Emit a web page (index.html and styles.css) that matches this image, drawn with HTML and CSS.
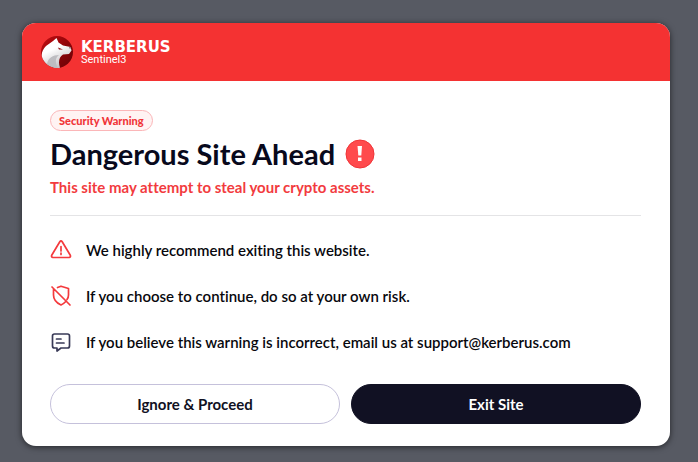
FILE: index.html
```html
<!DOCTYPE html>
<html lang="en">
<head>
<meta charset="utf-8">
<meta name="viewport" content="width=device-width, initial-scale=1">
<title>Dangerous Site Ahead</title>
<link rel="stylesheet" href="styles.css">
</head>
<body>
<main class="card">
  <header class="brand">
    <svg class="brand-logo" viewBox="0 0 32 32" aria-hidden="true">
      <defs>
        <linearGradient id="disc" x1="0" y1="0" x2="1" y2="1"><stop offset="0" stop-color="#c40d12"/><stop offset=".5" stop-color="#920408"/><stop offset="1" stop-color="#650206"/></linearGradient>
        <linearGradient id="fur" x1="0" y1="0" x2=".5" y2="1"><stop offset=".45" stop-color="#fff"/><stop offset="1" stop-color="#c4c4c7"/></linearGradient>
      </defs>
      <circle cx="16" cy="16" r="16" fill="url(#disc)"/>
      <path d="M1 21C0 17 2 13 5 10L12 5L15.500 2L17.500 6.500L22 9.500L29.500 11L30.500 14.500L28 18L22 18.500C18 21 17 26 19 31.700C11 33 3 28 1 21Z" fill="url(#fur)"/>
      <path d="M6 28C7 22 12 19 18 19C14 22 14 27 17 32C12 32 8 30 6 28Z" fill="#bdbdc1"/>
      <path d="M17 11.500L22 13.500L18 13.500Z" fill="#8c090d"/>
      <path d="M28 11L30 11.500L29 13Z" fill="#5b5055"/>
    </svg>
    <div class="brand-text">
      <span class="brand-name">KERBERUS</span>
      <span class="brand-product">Sentinel3</span>
    </div>
  </header>
  <div class="content">
    <span class="tag">Security Warning</span>
    <div class="heading">
      <h1>Dangerous Site Ahead</h1>
      <svg class="alert" viewBox="0 0 30 30" aria-hidden="true"><circle cx="15" cy="15" r="14" fill="#ff4a4d" stroke="#ef3438"/><path d="M12.500 7h4.500l-.700 9.500h-3zM13 18.500h3.500v3.500H13z" fill="#fff"/></svg>
    </div>
    <p class="lead">This site may attempt to steal your crypto assets.</p>
    <ul class="notes">
      <li>
        <svg class="icon danger" viewBox="0 0 22 22" aria-hidden="true"><path d="M9.800 2.700L1.700 16.300Q1 18.100 3 18.500H19Q21 18.100 20.300 16.300L12.200 2.700Q11 .9 9.800 2.700ZM11 7.500v4.500M11 14v1.500"/></svg>
        <span>We highly recommend exiting this website.</span>
      </li>
      <li>
        <svg class="icon danger" viewBox="0 0 22 22" aria-hidden="true"><path d="M2 2L20 20M7.500 2.500L11 1.200L18.500 3.500V10Q18.500 12.500 17 14.500M3.500 4.500V10Q3.500 16.500 11 20Q13.500 19 15.500 16.800"/></svg>
        <span>If you choose to continue, do so at your own risk.</span>
      </li>
      <li>
        <svg class="icon" viewBox="0 0 22 22" aria-hidden="true"><path d="M4.500 3H17.500Q19.500 3 19.500 5V15Q19.500 17 17.500 17H11L7 20V17H4.500Q2.500 17 2.500 15V5Q2.500 3 4.500 3ZM6.500 8H11M6.500 12H14"/></svg>
        <span>If you believe this warning is incorrect, email us at support@kerberus.com</span>
      </li>
    </ul>
    <div class="actions">
      <button type="button" class="button">Ignore &amp; Proceed</button>
      <button type="button" class="button primary">Exit Site</button>
    </div>
  </div>
</main>
</body>
</html>
```
FILE: styles.css
```css
* { box-sizing: border-box; }
body {
  margin: 0;
  padding: 23px 28px 15px 22px;
  background: #575a63;
  color: #08080d;
  font-family: Lato, "Liberation Sans", sans-serif;
  font-variant-ligatures: none;
}
.card {
  overflow: hidden;
  border-radius: 14px;
  background: #fff;
  box-shadow: 0 1px 6px rgba(0, 0, 0, .6);
}
.brand {
  display: flex;
  align-items: center;
  gap: 8px;
  padding: 13px 19px;
  background: #f43232;
  color: #fff;
}
.brand-logo { width: 32px; height: 32px; }
.brand-text { display: flex; flex-direction: column; }
.brand-name {
  font: bold 15px/14px "DejaVu Sans", sans-serif;
}
.brand-product { font-family: Roboto, sans-serif; font-size: 11px; line-height: 11px; }
.content { padding: 29px 29px 22px 28px; }
.tag {
  display: block;
  width: fit-content;
  padding: 0 8px;
  border: 1px solid #fbb6b8;
  border-radius: 11px;
  background: #fff3f3;
  color: #f03538;
  font-size: 11px;
  font-weight: 900;
  line-height: 19px;
}
.heading {
  display: flex;
  align-items: center;
  gap: 10px;
  margin-top: 4px;
}
h1 {
  margin: 0;
  color: #08091c;
  font-size: 29px;
  font-weight: 700;
  line-height: 38px;
}
.alert { width: 30px; height: 30px; }
.lead {
  margin: 3px 0 0;
  padding-bottom: 17px;
  border-bottom: 1px solid #e4e4e6;
  color: #f23b3e;
  font-size: 15px;
  font-weight: 700;
  line-height: 22px;
}
.notes {
  display: grid;
  gap: 24px;
  margin: 23px 0 0;
  padding: 0;
  list-style: none;
  font-size: 15px;
  font-weight: 600;
  line-height: 22px;
}
.notes li { display: flex; align-items: center; gap: 14px; }
.icon {
  width: 22px;
  height: 22px;
  fill: none;
  stroke: #393a57;
  stroke-width: 1.7;
  stroke-linecap: round;
  stroke-linejoin: round;
}
.danger { stroke: #f43a3d; }
.actions {
  display: grid;
  grid-template-columns: 1fr 1fr;
  gap: 11px;
  margin-top: 31px;
}
.button {
  height: 40px;
  border: 1px solid #c5c1db;
  border-radius: 20px;
  background: #fff;
  color: #111123;
  font-family: inherit;
  font-size: 15px;
  font-weight: 700;
}
.primary { border-color: #111123; background: #111123; color: #fff; }
```
